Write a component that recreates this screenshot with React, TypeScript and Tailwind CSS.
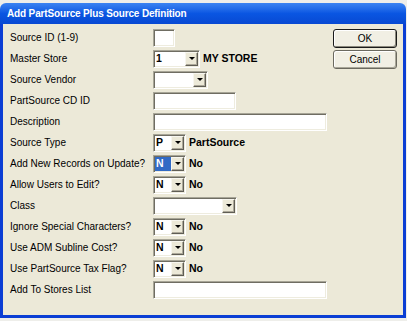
import React from "react";

const FONT = { fontFamily: '"Liberation Sans", Arial, sans-serif' };

// classic sunken edit border
const sunken =
  "border border-t-[#a7a597] border-l-[#a7a597] border-b-white border-r-white shadow-[inset_1px_1px_0_#6f6d62,inset_-1px_-1px_0_#eeecdf]";

function TextBox({ w }: { w: string }) {
  return <div className={`${w} h-[18px] bg-white ${sunken}`} />;
}

function Combo({ w, value, selected }: { w: string; value?: string; selected?: boolean }) {
  return (
    <div className={`${w} h-[18px] flex bg-white ${sunken} p-[1px]`}>
      <div className="flex-1 flex items-center min-w-0">
        {value && (
          <span
            className={`h-full flex items-center pl-[1px] pr-[5px] font-bold text-[10.5px] leading-none ${
              selected ? "bg-[#316ac5] text-white w-full" : "text-black"
            }`}
          >
            {value}
          </span>
        )}
      </div>
      <div className="w-[13px] h-full flex items-center justify-center bg-[#ece9d8] border border-t-[#f7f6ef] border-l-[#f7f6ef] border-b-[#5f5d55] border-r-[#5f5d55] shadow-[inset_-1px_-1px_0_#aca899]">
        <div className="w-0 h-0 border-l-[3px] border-r-[3px] border-t-[3px] border-l-transparent border-r-transparent border-t-black" />
      </div>
    </div>
  );
}

function Row({ label, children }: { label: string; children?: React.ReactNode }) {
  return (
    <div className="h-[19px] flex items-center">
      <div className="w-[143px] text-[10px] text-black leading-none">{label}</div>
      <div className="flex items-center gap-[3px]">{children}</div>
    </div>
  );
}

function Val({ text }: { text: string }) {
  return <span className="font-bold text-[10.5px] text-black leading-none">{text}</span>;
}

function Button({ label, isDefault }: { label: string; isDefault?: boolean }) {
  return (
    <div
      className={`h-[19px] w-[64px] flex items-center justify-center rounded-[3px] bg-[#f1efe4] text-[10px] text-black ${
        isDefault
          ? "border border-[#1a1a1a] shadow-[inset_1px_1px_0_#ffffff,inset_-1px_-1px_0_#8a887c]"
          : "border border-[#6b695f] shadow-[inset_1px_1px_0_#ffffff,inset_-1px_-1px_0_#a9a799]"
      }`}
    >
      {label}
    </div>
  );
}

export default function App() {
  return (
    <div className="w-[407px] h-[321px] bg-[#eeeeea] overflow-hidden" style={FONT}>
      <div className="mt-[3px] w-[406px] h-[315px] flex flex-col">
        {/* title bar */}
        <div className="h-[21px] rounded-t-[6px] bg-gradient-to-b from-[#3b83f2] via-[#0a56e2] to-[#0849d2] flex items-center pl-[7px]">
          <span className="text-white font-bold text-[10px] tracking-[-0.15px] leading-none">
            Add PartSource Plus Source Definition
          </span>
        </div>

        {/* body */}
        <div className="flex-1 flex bg-[#ece9d8] border-x-[3px] border-b-[3px] border-[#0b3ed4]">
          <div className="flex-1 pl-[7px] pt-[4px] flex flex-col gap-[2px]">
            <Row label="Source ID (1-9)">
              <TextBox w="w-[22px]" />
            </Row>
            <Row label="Master Store">
              <Combo w="w-[47px]" value="1" />
              <Val text="MY STORE" />
            </Row>
            <Row label="Source Vendor">
              <Combo w="w-[55px]" />
            </Row>
            <Row label="PartSource CD ID">
              <TextBox w="w-[83px]" />
            </Row>
            <Row label="Description">
              <TextBox w="w-[174px]" />
            </Row>
            <Row label="Source Type">
              <Combo w="w-[33px]" value="P" />
              <Val text="PartSource" />
            </Row>
            <Row label="Add New Records on Update?">
              <Combo w="w-[33px]" value="N" selected />
              <Val text="No" />
            </Row>
            <Row label="Allow Users to Edit?">
              <Combo w="w-[33px]" value="N" />
              <Val text="No" />
            </Row>
            <Row label="Class">
              <Combo w="w-[84px]" />
            </Row>
            <Row label="Ignore Special Characters?">
              <Combo w="w-[33px]" value="N" />
              <Val text="No" />
            </Row>
            <Row label="Use ADM Subline Cost?">
              <Combo w="w-[33px]" value="N" />
              <Val text="No" />
            </Row>
            <Row label="Use PartSource Tax Flag?">
              <Combo w="w-[33px]" value="N" />
              <Val text="No" />
            </Row>
            <Row label="Add To Stores List">
              <TextBox w="w-[174px]" />
            </Row>
          </div>

          <div className="w-[64px] mr-[6px] pt-[5px] flex flex-col gap-[2px]">
            <Button label="OK" isDefault />
            <Button label="Cancel" />
          </div>
        </div>
      </div>
    </div>
  );
}
